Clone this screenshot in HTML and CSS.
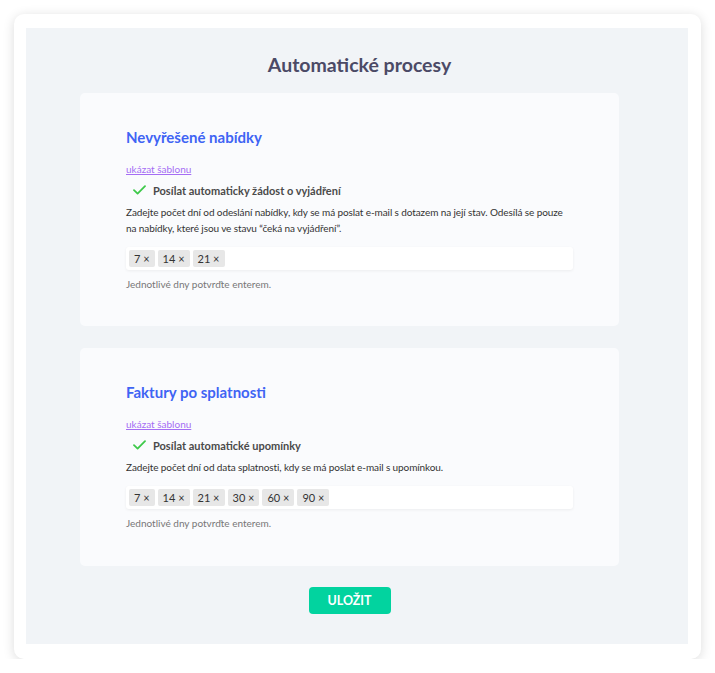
FILE: index.html
```html
<!DOCTYPE html>
<html lang="cs">
<head>
<meta charset="utf-8">
<title>Automatické procesy</title>
<link rel="stylesheet" href="styles.css">
</head>
<body>
<div class="frame">
  <div class="panel">
    <h1 class="page-title">Automatické procesy</h1>
    <div class="column">
      <section class="card">
        <h2 class="card-title">Nevyřešené nabídky</h2>
        <a class="template-link" href="#">ukázat šablonu</a>
        <div class="check-row">
          <svg class="check" width="13" height="10" viewBox="0 0 13 10"><path d="M1 5.2 L4.6 8.6 L12 1.2" fill="none" stroke="#3ec94a" stroke-width="1.8" stroke-linecap="round" stroke-linejoin="round"/></svg>
          <span>Posílat automaticky žádost o vyjádření</span>
        </div>
        <p class="desc">Zadejte počet dní od odeslání nabídky, kdy se má poslat e-mail s dotazem na její stav. Odesílá se pouze na nabídky, které jsou ve stavu “čeká na vyjádření”.</p>
        <div class="tags">
          <span class="tag">7 ×</span><span class="tag">14 ×</span><span class="tag">21 ×</span>
        </div>
        <p class="hint">Jednotlivé dny potvrďte enterem.</p>
      </section>
      <section class="card">
        <h2 class="card-title">Faktury po splatnosti</h2>
        <a class="template-link" href="#">ukázat šablonu</a>
        <div class="check-row">
          <svg class="check" width="13" height="10" viewBox="0 0 13 10"><path d="M1 5.2 L4.6 8.6 L12 1.2" fill="none" stroke="#3ec94a" stroke-width="1.8" stroke-linecap="round" stroke-linejoin="round"/></svg>
          <span>Posílat automatické upomínky</span>
        </div>
        <p class="desc">Zadejte počet dní od data splatnosti, kdy se má poslat e-mail s upomínkou.</p>
        <div class="tags">
          <span class="tag">7 ×</span><span class="tag">14 ×</span><span class="tag">21 ×</span><span class="tag">30 ×</span><span class="tag">60 ×</span><span class="tag">90 ×</span>
        </div>
        <p class="hint">Jednotlivé dny potvrďte enterem.</p>
      </section>
      <div class="actions">
        <button class="save">ULOŽIT</button>
      </div>
    </div>
  </div>
</div>
</body>
</html>
```
FILE: styles.css
```css
* { box-sizing: border-box; }
html, body { margin: 0; padding: 0; background: #ffffff; }
body { font-family: "Lato", "Nunito", "Open Sans", sans-serif; color: #333; }

.frame {
  margin: 14px 0 0 14px;
  width: 687px;
  height: 645px;
  background: #fff;
  border-radius: 10px;
  box-shadow: 0 2px 12px rgba(0,0,0,0.14);
  padding: 14px 13px 15px 12px;
}
.panel {
  background: #f1f4f7;
  height: 616px;
  padding-top: 23px;
}
.page-title {
  margin: 0;
  text-align: center;
  font-size: 19.5px;
  line-height: 28px;
  font-weight: 700;
  color: #4b4a66;
  padding-left: 5px;
}
.column {
  margin: 14px 69px 0 54px;
}
.card {
  background: #fafbfd;
  border-radius: 5px;
  padding: 34px 46px 35px;
  margin-bottom: 22px;
}
.card + .card { padding-bottom: 36px; margin-bottom: 21px; }
.card-title {
  margin: 0;
  font-size: 15px;
  line-height: 20px;
  font-weight: 700;
  color: #3f64f4;
}
.template-link {
  display: block;
  width: max-content;
  margin-top: 14px;
  font-size: 10px;
  line-height: 16px;
  color: #a56ef4;
  text-decoration: underline;
}
.check-row {
  display: flex;
  align-items: center;
  gap: 7px;
  margin-top: 4px;
  padding-left: 7px;
  height: 18px;
  font-size: 11px;
  font-weight: 700;
  color: #4a4a4a;
}
.desc {
  margin: 5px 0 0;
  font-size: 10px;
  letter-spacing: -0.1px;
  line-height: 16px;
  color: #333;
}
.tags {
  margin-top: 11px;
  height: 23px;
  background: #fff;
  border-radius: 3px;
  box-shadow: 0 1px 3px rgba(0,0,0,0.06);
  padding: 3px;
  display: flex;
  gap: 3px;
}
.tag {
  height: 17px;
  line-height: 17px;
  padding: 0 5px;
  background: #e7e7e7;
  border-radius: 2px;
  font-size: 11px;
  color: #333;
}
.hint {
  margin: 7px 0 0;
  font-size: 10px;
  line-height: 14px;
  color: #777;
}
.actions {
  display: flex;
  justify-content: center;
}
.save {
  width: 82px;
  height: 27px;
  border: 0;
  border-radius: 4px;
  background: #02d39f;
  color: #fff;
  font-family: inherit;
  font-weight: 700;
  font-size: 12.5px;
}
```
